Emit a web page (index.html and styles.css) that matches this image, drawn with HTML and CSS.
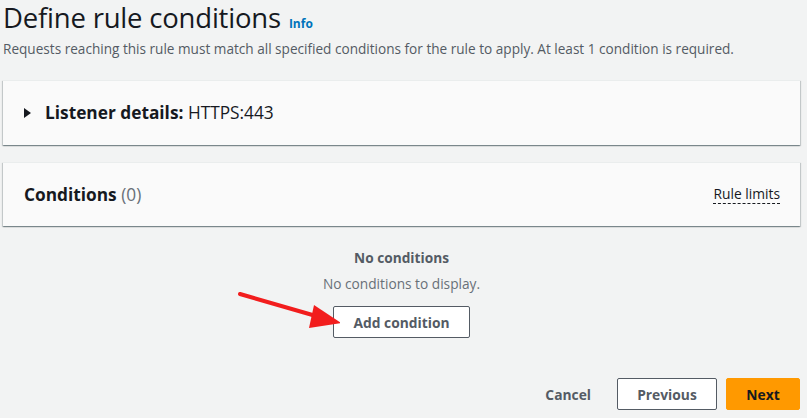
FILE: index.html
```html
<!DOCTYPE html>
<html lang="en">
<head>
<meta charset="utf-8">
<title>Define rule conditions</title>
<link rel="stylesheet" href="styles.css">
</head>
<body>
<div class="page">
  <header class="header">
    <div class="title-row">
      <h1 class="title">Define rule conditions</h1>
      <a class="info" href="#">Info</a>
    </div>
    <p class="subtitle">Requests reaching this rule must match all specified conditions for the rule to apply. At least 1 condition is required.</p>
  </header>

  <section class="panel">
    <div class="panel-head">
      <span class="caret"></span>
      <h2 class="panel-title">Listener details: <span class="normal">HTTPS:443</span></h2>
    </div>
  </section>

  <section class="panel panel-conditions">
    <div class="panel-head">
      <h2 class="panel-title">Conditions <span class="count">(0)</span></h2>
      <a class="limits" href="#">Rule limits</a>
    </div>
  </section>

  <div class="empty">
    <div class="empty-title">No conditions</div>
    <div class="empty-text">No conditions to display.</div>
    <div class="add-wrap">
      <svg class="arrow" width="110" height="45" viewBox="0 0 110 45">
        <line x1="10" y1="8" x2="86" y2="30" stroke="#f21d1d" stroke-width="4" stroke-linecap="round"/>
        <polygon points="111,37 84,19 79,42" fill="#f21d1d"/>
      </svg>
      <button class="btn btn-normal">Add condition</button>
    </div>
  </div>

  <footer class="footer">
    <button class="btn btn-link">Cancel</button>
    <button class="btn btn-normal">Previous</button>
    <button class="btn btn-primary">Next</button>
  </footer>
</div>
</body>
</html>
```

FILE: styles.css
```css
* { box-sizing: border-box; }
html, body { margin: 0; padding: 0; }
body {
  background: #f2f3f3;
  font-family: "Open Sans", "Noto Sans", Arial, sans-serif;
  color: #16191f;
  width: 807px;
  height: 418px;
  overflow: hidden;
}
.page {
  padding: 2px 7px 0 3px;
}
.title-row {
  display: flex;
  align-items: baseline;
  gap: 8px;
}
.title {
  margin: 0;
  font-size: 27.5px;
  font-weight: 400;
  line-height: 32px;
  color: #16191f;
  letter-spacing: -0.2px;
}
.info {
  font-size: 12px;
  font-weight: 700;
  color: #0073bb;
  text-decoration: none;
}
.subtitle {
  margin: 5px 0 0;
  font-size: 13.6px;
  line-height: 20px;
  color: #545b64;
}
.panel {
  background: #fafafa;
  border-top: 1px solid #eaeded;
  box-shadow: 0 1px 1px 0 rgba(0,28,36,0.3), 1px 1px 1px 0 rgba(0,28,36,0.15), -1px 1px 1px 0 rgba(0,28,36,0.15);
  margin-top: 21px;
  height: 65px;
}
.panel-conditions { margin-top: 17px; height: 64px; }
.panel-head {
  display: flex;
  align-items: center;
  height: 100%;
  padding: 0 20px 0 21px;
}
.caret {
  width: 0;
  height: 0;
  border-top: 5px solid transparent;
  border-bottom: 5px solid transparent;
  border-left: 7px solid #16191f;
  margin-right: 14px;
}
.panel-title {
  margin: 0;
  font-size: 17.3px;
  font-weight: 700;
  line-height: 22px;
  color: #16191f;
  flex: 1;
}
.normal { font-weight: 400; }
.count { font-weight: 400; color: #687078; }
.limits {
  font-size: 13.8px;
  color: #16191f;
  text-decoration: none;
  border-bottom: 1px dashed #16191f;
  line-height: 18px;
}
.empty {
  display: flex;
  flex-direction: column;
  align-items: center;
  padding-top: 22px;
  color: #545b64;
  font-size: 13.7px;
}
.empty-title {
  font-weight: 700;
  line-height: 20px;
}
.empty-text {
  margin-top: 6px;
  line-height: 20px;
  color: #687078;
}
.add-wrap {
  position: relative;
  margin-top: 12px;
}
.arrow {
  position: absolute;
  left: -103px;
  top: -20px;
}
.btn {
  font-family: inherit;
  font-size: 13.8px;
  font-weight: 700;
  height: 32px;
  border-radius: 2px;
  padding: 0 18px;
  cursor: pointer;
}
.btn-normal {
  background: #ffffff;
  border: 1px solid #545b64;
  color: #545b64;
}
.add-wrap .btn-normal { width: 137px; }
.footer {
  display: flex;
  justify-content: flex-end;
  align-items: center;
  gap: 9px;
  margin-top: 40px;
}
.btn-link {
  background: transparent;
  border: 1px solid transparent;
  color: #545b64;
  margin-right: -2px;
}
.footer .btn-normal { width: 100px; }
.btn-primary {
  background: #ff9900;
  border: 1px solid #ff9900;
  color: #16191f;
  width: 74px;
}
```
